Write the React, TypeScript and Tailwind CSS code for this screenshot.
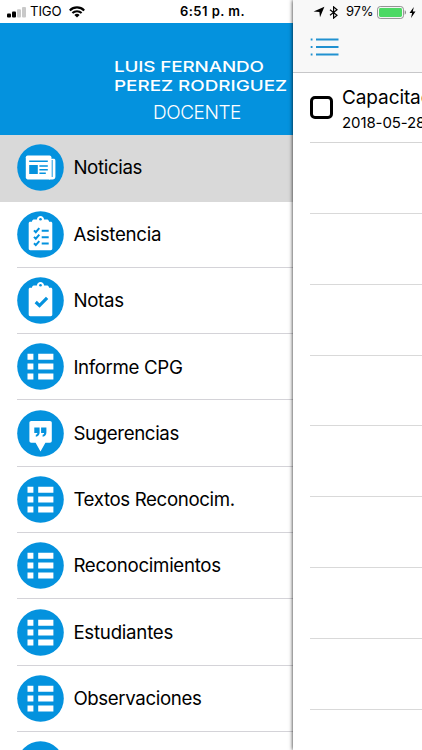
import { ReactNode } from 'react'
import clsx from 'clsx'

type IconName = 'news' | 'checklist' | 'clipboard' | 'list' | 'quote'

interface MenuItem {
  label: string
  icon: IconName
  tracking: string
}

const menuItems: MenuItem[] = [
  { label: 'Noticias', icon: 'news', tracking: 'tracking-[-0.35px]' },
  { label: 'Asistencia', icon: 'checklist', tracking: 'tracking-[-0.3px]' },
  { label: 'Notas', icon: 'clipboard', tracking: 'tracking-[-0.3px]' },
  { label: 'Informe CPG', icon: 'list', tracking: 'tracking-[-0.35px]' },
  { label: 'Sugerencias', icon: 'quote', tracking: 'tracking-[-0.37px]' },
  { label: 'Textos Reconocim.', icon: 'list', tracking: 'tracking-[-0.37px]' },
  { label: 'Reconocimientos', icon: 'list', tracking: 'tracking-[-0.29px]' },
  { label: 'Estudiantes', icon: 'list', tracking: 'tracking-[-0.25px]' },
  { label: 'Observaciones', icon: 'list', tracking: 'tracking-[-0.38px]' },
  { label: '', icon: 'list', tracking: 'tracking-normal' },
]

const BLUE = '#0492de'

// Clipboard body with the ring on top
function Board() {
  return (
    <>
      <path
        fill="#fff"
        d="M13.3 10.7h1.6c.2-1.5 1.2-2.1 2.6-2.1h2.4c.2-2 1.7-3.5 3.6-3.5s3.4 1.5 3.6 3.5h2.4c1.4 0 2.4.6 2.6 2.1h1.6c1 0 1.6.6 1.6 1.6v25.3c0 1-.6 1.6-1.6 1.6H13.3c-1 0-1.6-.6-1.6-1.6V12.3c0-1 .6-1.6 1.6-1.6Z"
      />
      <circle cx="23.5" cy="8.2" r="1.3" fill={BLUE} />
    </>
  )
}

const glyphs: Record<IconName, ReactNode> = {
  news: (
    <>
      <rect x="8.8" y="11.4" width="25.6" height="24" rx="1.8" fill="#fff" />
      <path
        d="M34 14.8h2.4c1.3 0 2 .6 2 1.9v15.7c0 2-1 3-2.9 3H32v-1.5h2Z"
        fill="#fff"
      />
      <path d="M35.2 16v17" stroke={BLUE} strokeWidth="0.9" />
      <path
        d="M12.2 17.3h18.6M22.4 21.9h8.4M22.4 25.7h8.4M22.4 29.2h6.4"
        stroke={BLUE}
        strokeWidth="1.5"
      />
      <path d="M12.2 21.1h8.6v8.8h-8.6z" fill={BLUE} />
    </>
  ),
  checklist: (
    <>
      <Board />
      <path
        d="m17 19.4 1.8 1.8 3.5-4M17 25.9l1.8 1.8 3.5-4M17 32.3l1.8 1.8 3.5-4M24.7 19.8h7M24.7 26.2h7M24.7 32.4h7"
        fill="none"
        stroke={BLUE}
        strokeWidth="2"
      />
    </>
  ),
  clipboard: (
    <>
      <Board />
      <path
        d="m18.7 25 3.8 3.6 7.6-7.8"
        fill="none"
        stroke={BLUE}
        strokeWidth="3.2"
      />
    </>
  ),
  list: (
    <path
      fill="#fff"
      d="M10.5 10.7h5.9v6h-5.9zM10.5 20.6h5.9v6h-5.9zM10.5 30.4h5.9v6h-5.9zM21.2 10.7h15.2v6H21.2zM21.2 20.6h15.2v6H21.2zM21.2 30.4h15.2v6H21.2z"
    />
  ),
  quote: (
    <>
      <path
        fill="#fff"
        d="M14.3 11h18.6c1.2 0 1.9.7 1.9 1.9v17.9c0 1.2-.7 1.9-1.9 1.9h-4.5l-4.9 8.7-4.9-8.7h-4.3c-1.2 0-1.9-.7-1.9-1.9V12.9c0-1.2.7-1.9 1.9-1.9Z"
      />
      <path
        fill={BLUE}
        d="M17.3 17.4h5.3v5.2c0 2.4-1.2 3.8-3.8 4.1v-1.9c1-.3 1.5-.9 1.5-1.9h-3zM24.1 17.4h5.3v5.2c0 2.4-1.2 3.8-3.8 4.1v-1.9c1-.3 1.5-.9 1.5-1.9h-3z"
      />
    </>
  ),
}

function MenuIcon({ name }: { name: IconName }) {
  return (
    <svg viewBox="0 0 47 47" className="size-[47px] shrink-0">
      <circle cx="23.5" cy="23.5" r="23.3" fill={BLUE} />
      {glyphs[name]}
    </svg>
  )
}

function MenuRow({ item, active }: { item: MenuItem; active: boolean }) {
  return (
    <li
      className={clsx(
        'shrink-0 pl-[17.4px]',
        active ? 'h-[66.6px] bg-[#d9d9d9]' : 'h-[66.3px]'
      )}
    >
      <div
        className={clsx(
          'flex h-full items-center border-b',
          active ? 'border-[#d9d9d9]' : 'border-[#d4d3d8]'
        )}
      >
        <MenuIcon name={item.icon} />
        <span
          className={clsx(
            'ml-[9px] whitespace-nowrap pt-[1.4px] text-[18.7px] leading-6 text-black',
            item.tracking
          )}
        >
          {item.label}
        </span>
      </div>
    </li>
  )
}

function SideMenu() {
  return (
    <aside className="flex h-full w-[293px] shrink-0 flex-col overflow-hidden bg-white">
      <div className="flex h-[23px] shrink-0 items-center pl-[7px] pt-px">
        <svg viewBox="0 0 19 11" className="h-[11px] w-[19px]">
          <rect x="0" y="6.5" width="4" height="4" rx="1" />
          <rect x="5" y="4.5" width="4" height="6" rx="1" />
          <rect x="10" y="2.3" width="4" height="8.2" rx="1" fill="#c9c9c9" />
          <rect x="15" y="0" width="4" height="10.5" rx="1" fill="#c9c9c9" />
        </svg>
        <span className="ml-1 w-9 whitespace-nowrap text-[13.2px] tracking-[-0.1px]">
          TIGO
        </span>
        <svg viewBox="0 0 16 12" className="ml-[3px] h-3 w-4">
          <path
            d="M.8 4.4a10.2 10.2 0 0 1 14.4 0M3.4 7.1a6.5 6.5 0 0 1 9.2 0"
            fill="none"
            stroke="#000"
            strokeWidth="2.1"
          />
          <path d="M5.4 9a3.7 3.7 0 0 1 5.2 0L8 11.6Z" />
        </svg>
        <span className="ml-[95px] whitespace-nowrap text-[13px] font-semibold tracking-[0.45px]">
          6:51 p. m.
        </span>
      </div>
      <header className="flex h-[112px] shrink-0 flex-col bg-[#0492de] pl-[114px] pt-[34px] text-white">
        <div className="w-max origin-left scale-x-[1.24] whitespace-nowrap text-[15.2px] font-medium leading-[19px] tracking-[-0.1px]">
          <p>LUIS FERNANDO</p>
          <p className="tracking-[0px]">PEREZ RODRIGUEZ</p>
        </div>
        <p className="ml-[39px] mt-[6px] text-[19px] font-light leading-6 tracking-[-0.45px]">
          DOCENTE
        </p>
      </header>
      <ul className="flex flex-col">
        {menuItems.map((item, i) => (
          <MenuRow key={i} item={item} active={i === 0} />
        ))}
      </ul>
    </aside>
  )
}

function StatusRight() {
  return (
    <div className="flex h-[23px] items-center pl-[20px] pt-px">
      <svg viewBox="0 0 12 12" className="size-3">
        <path d="M11.4.8 7 11.3 6.4 6 .6 5.4Z" />
      </svg>
      <svg viewBox="0 0 10 13" className="ml-[4px] h-[13px] w-[10px]">
        <path
          d="m1 3.7 7 5.5-3.4 2.9V.9L8 3.8 1 9.2"
          fill="none"
          stroke="#000"
          strokeWidth="1.2"
        />
      </svg>
      <span className="ml-[7px] w-[28px] whitespace-nowrap text-[13px] tracking-[-0.2px]">
        97%
      </span>
      <svg viewBox="0 0 30 13" className="ml-[3px] h-[13px] w-[30px]">
        <rect
          x="0.6"
          y="0.6"
          width="25.8"
          height="11.8"
          rx="2.6"
          fill="#fff"
          stroke="#8b8b8b"
        />
        <rect x="2" y="2" width="23" height="9" rx="1.4" fill="#4cd964" />
        <path d="M27.7 4.3c1.7.5 1.7 3.9 0 4.4Z" fill="#8b8b8b" />
      </svg>
      <svg viewBox="0 0 7 11" className="ml-[2px] h-[11px] w-[7px]">
        <path d="M4.8 0 .5 6.1h2.6L2 11l4.5-6.4H3.8Z" />
      </svg>
    </div>
  )
}

function ContentPanel() {
  return (
    <main className="flex h-full flex-1 flex-col overflow-hidden bg-white shadow-[0_0_4px_rgba(0,0,0,0.9)]">
      <div className="h-[73px] shrink-0 border-b border-[#c7c7c9] bg-[#f8f8f8]">
        <StatusRight />
        <svg viewBox="0 0 29 18" className="ml-[17px] mt-[15px] h-[18px] w-[29px]">
          <path
            d="M6 1.5h22.5M6 9h22.5M6 16.4h22.5M.7 1.5h1.8M.7 9h1.8M.7 16.4h1.8"
            stroke="#2191d0"
            strokeWidth="2"
          />
        </svg>
      </div>
      <div className="flex flex-col pl-[17px]">
        <div className="flex h-[70px] shrink-0 items-center border-b border-[#d5d5d5]">
          <span className="size-[23px] shrink-0 rounded-[5px] border-[3px] border-black" />
          <div className="ml-[9px] whitespace-nowrap pt-[5px] text-black">
            <p className="text-[19px] leading-6 tracking-[-0.1px]">Capacitac</p>
            <p className="mt-px text-[15px] leading-6 tracking-[-0.1px]">2018-05-28</p>
          </div>
        </div>
        {Array.from({ length: 9 }, (_, i) => (
          <div key={i} className="h-[70.85px] shrink-0 border-b border-[#d9d9d9]" />
        ))}
      </div>
    </main>
  )
}

export default function App() {
  return (
    <div className="flex h-[750px] w-[422px] overflow-hidden bg-white font-['Inter','Liberation_Sans',sans-serif]">
      <SideMenu />
      <div className="relative flex min-w-0 flex-1">
        <ContentPanel />
      </div>
    </div>
  )
}
